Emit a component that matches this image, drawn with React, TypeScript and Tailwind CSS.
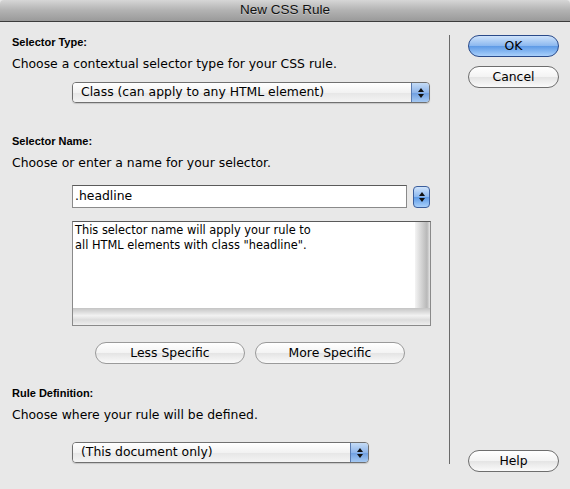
import React from "react";

const font = { fontFamily: '"Lucida Grande", "DejaVu Sans", "Liberation Sans", sans-serif' };
const boldFont = { fontFamily: '"Liberation Sans", Arial, sans-serif' };

function Arrows() {
  return (
    <svg width="8" height="12" viewBox="0 0 8 12">
      <path d="M4 1 L7 5 L1 5 Z" fill="#111" />
      <path d="M4 11 L7 7 L1 7 Z" fill="#111" />
    </svg>
  );
}

function PopUp({ label, width }: { label: string; width: string }) {
  return (
    <div
      className={`flex h-[21px] ${width} rounded-[4px] border border-[#707070] overflow-hidden shadow-[0_1px_1px_rgba(0,0,0,0.15)]`}
    >
      <div className="flex-1 flex items-center pl-[8px] text-[12.4px] text-black bg-[linear-gradient(#ffffff,#f2f2f2_50%,#e6e6e6_51%,#f4f4f4)]">
        {label}
      </div>
      <div className="w-[18px] flex items-center justify-center border-l border-[#5a7bb0] bg-[linear-gradient(#c5dcf6,#8fb5ea_50%,#6d9de0_51%,#a6c9f2)]">
        <Arrows />
      </div>
    </div>
  );
}

function AquaButton({ label, width, blue, dim }: { label: string; width: string; blue?: boolean; dim?: boolean }) {
  return (
    <div
      className={`${width} h-[22px] rounded-full flex items-center justify-center text-[12.4px] ${
        blue
          ? "border border-[#2a4a8a] bg-[linear-gradient(#cfe3fb,#8ab7ef_50%,#5d9ae6_51%,#a9d0fb)] text-black"
          : "border border-[#6e6e6e] bg-[linear-gradient(#ffffff,#f3f3f3_50%,#e4e4e4_51%,#fafafa)] text-black"
      } ${dim ? "border-[#9a9a9a] text-[#555]" : ""}`}
    >
      {label}
    </div>
  );
}

export default function App() {
  return (
    <div style={font} className="w-[570px] h-[489px] bg-[#e8e8e8] flex flex-col overflow-hidden">
      <div
        style={boldFont}
        className="h-[22px] shrink-0 flex items-center justify-center border-b border-[#3c3c3c] bg-[linear-gradient(#d6d6d6,#b2b2b2_50%,#9a9a9a)] text-[13.5px] text-[#111] [text-shadow:0_1px_0_rgba(255,255,255,0.35)] rounded-t-[4px]"
      >
        New CSS Rule
      </div>
      <div className="flex flex-1">
        <div className="w-[449px] pl-[12px] pt-[12px] text-black">
          <div style={boldFont} className="text-[11px] font-bold h-[16px] leading-[16px]">Selector Type:</div>
          <div className="text-[12.4px] mt-[6px] h-[16px] leading-[16px]">Choose a contextual selector type for your CSS rule.</div>
          <div className="mt-[10px] ml-[60px]">
            <PopUp label="Class (can apply to any HTML element)" width="w-[358px]" />
          </div>
          <div style={boldFont} className="text-[11px] font-bold mt-[30px] h-[16px] leading-[16px]">Selector Name:</div>
          <div className="text-[12.4px] mt-[6px] h-[16px] leading-[16px]">Choose or enter a name for your selector.</div>
          <div className="mt-[14px] ml-[60px] flex items-center gap-[6px]">
            <div className="w-[335px] h-[23px] bg-white border border-[#8a8a8a] border-t-[#5a5a5a] flex items-center pl-[2px] text-[12.4px]">
              .headline
            </div>
            <div className="w-[17px] h-[22px] rounded-[4px] border border-[#3b5e9c] bg-[linear-gradient(#cfe3fb,#8ab7ef_50%,#5d9ae6_51%,#a9d0fb)] flex items-center justify-center">
              <Arrows />
            </div>
          </div>
          <div className="mt-[13px] ml-[60px] w-[359px] h-[105px] border border-[#8a8a8a] border-t-[#5a5a5a] bg-white flex flex-col">
            <div className="flex flex-1">
              <div className="flex-1 pl-[2px] pt-[1px] text-[11.4px] leading-[15px]">
                This selector name will apply your rule to
                <br />
                all HTML elements with class "headline".
              </div>
              <div className="w-[15px] bg-[linear-gradient(90deg,#f4f4f4,#d6d6d6_40%,#b8b8b8_80%,#e6e6e6)]" />
            </div>
            <div className="h-[17px] bg-[linear-gradient(#c4c4c4,#f2f2f2_45%,#dcdcdc_70%,#eeeeee)]" />
          </div>
          <div className="mt-[16px] ml-[83px] flex gap-[10px]">
            <AquaButton label="Less Specific" width="w-[150px]" dim />
            <AquaButton label="More Specific" width="w-[150px]" dim />
          </div>
          <div style={boldFont} className="text-[11px] font-bold mt-[21px] h-[16px] leading-[16px]">Rule Definition:</div>
          <div className="text-[12.4px] mt-[6px] h-[16px] leading-[16px]">Choose where your rule will be defined.</div>
          <div className="mt-[19px] ml-[60px]">
            <PopUp label="(This document only)" width="w-[297px]" />
          </div>
        </div>
        <div className="flex-1 flex flex-col pt-[13px] pb-[25px]">
          <div className="flex-1 border-l border-[#6a6a6a]" />
        </div>
        <div className="w-[120px] flex flex-col pt-[13px] pl-[18px] pb-[17px] -ml-[120px]">
          <AquaButton label="OK" width="w-[91px]" blue />
          <div className="mt-[9px]">
            <AquaButton label="Cancel" width="w-[91px]" />
          </div>
          <div className="mt-auto">
            <AquaButton label="Help" width="w-[91px]" />
          </div>
        </div>
      </div>
    </div>
  );
}
